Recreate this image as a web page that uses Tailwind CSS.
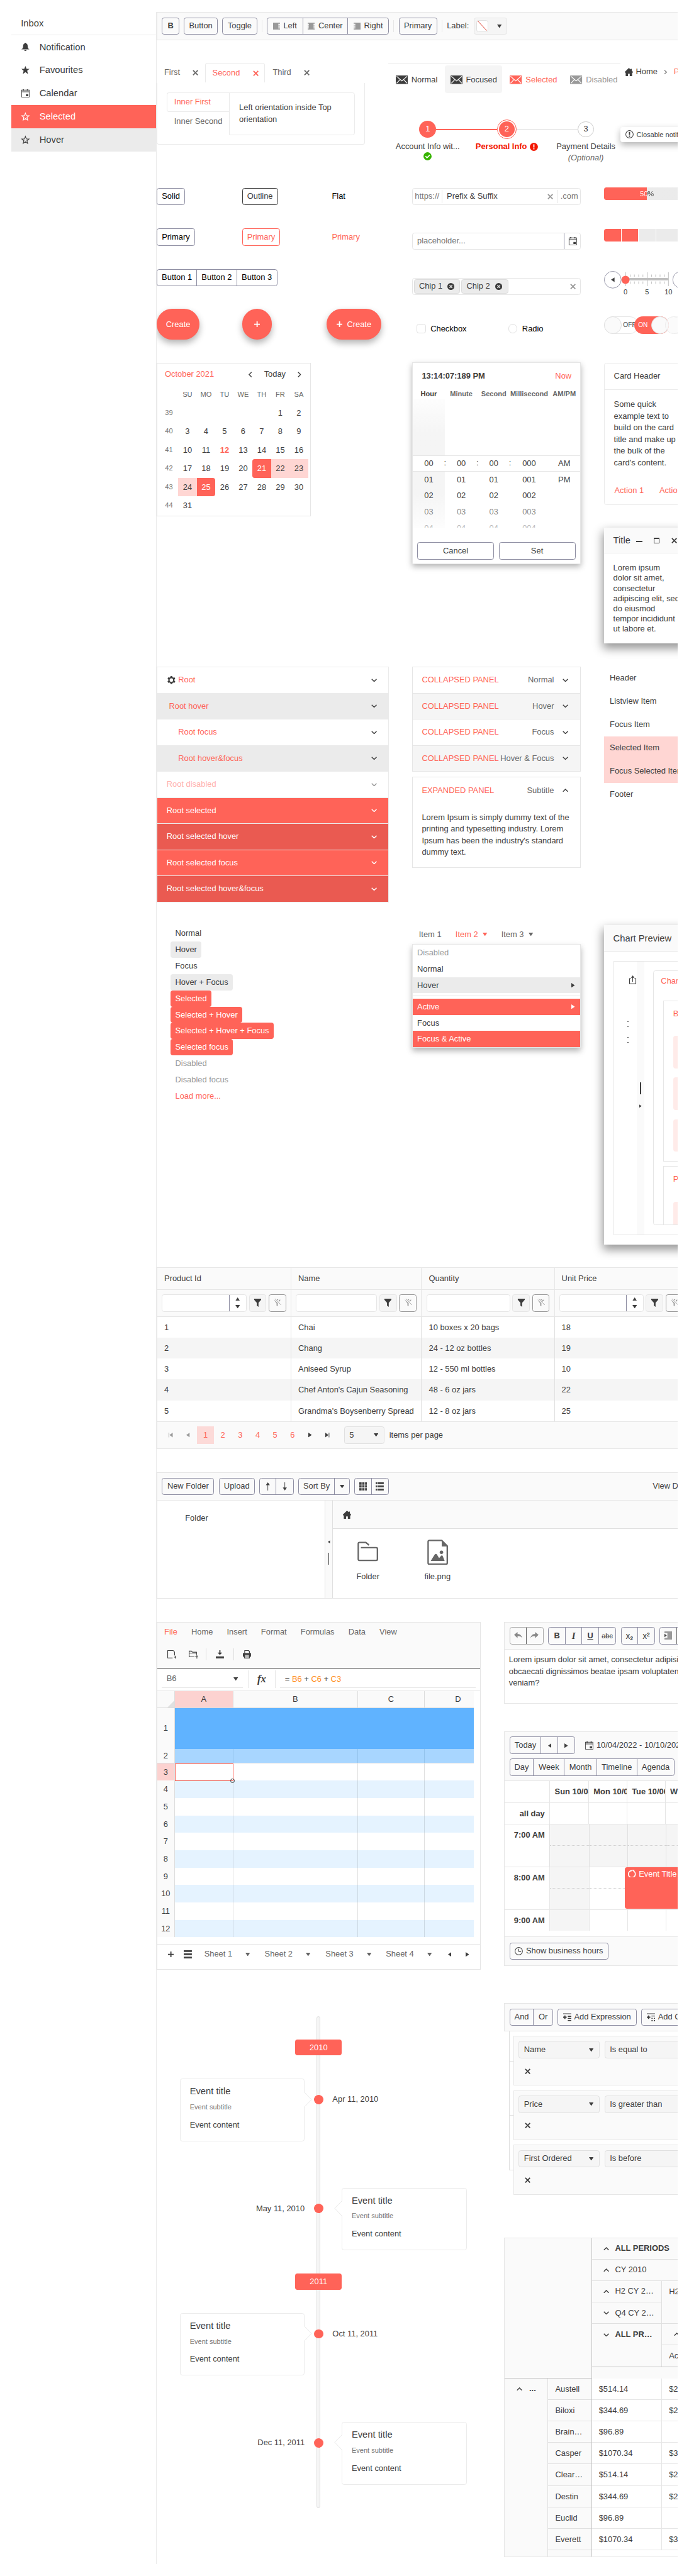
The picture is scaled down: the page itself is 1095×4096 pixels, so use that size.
<!DOCTYPE html>
<html lang="en">
<head>
<meta charset="utf-8">
<title>Theme preview</title>
<script src="https://cdn.jsdelivr.net/npm/@tailwindcss/browser@4"></script>
</head>
<body class="w-[1095px] h-[4096px] overflow-hidden bg-white">
<svg class="hidden">
  <symbol id="bell" viewBox="0 0 16 16"><path d="M8 1c-.8 0-1.2.5-1.2 1.2C4.600 2.800 4 5 4 7.500 4 10 3 11 1 12.500h14C13 11 12 10 12 7.500 12 5 11.400 2.800 9.200 2.200 9.200 1.500 8.800 1 8 1zM6 13.500c0 1 .8 1.700 2 1.700s2-.7 2-1.700z"/></symbol>
  <symbol id="star" viewBox="0 0 16 16"><path d="M8 1l2 5h5l-4 3.300L12.500 15 8 11.600 3.500 15 5 9.300 1 6h5z"/></symbol>
  <symbol id="staro" viewBox="0 0 16 16"><path fill="none" stroke="currentColor" stroke-width="1.200" d="M8 2l1.700 4.500h4.500l-3.600 3 1.300 4.700L8 11.300l-3.900 2.900 1.300-4.700-3.600-3h4.500z"/></symbol>
  <symbol id="cal" viewBox="0 0 16 16"><path fill-rule="evenodd" d="M1 2h14v13H1zM2 3v2h12V3zM2 6v8h12V6z"/><path d="M3.500 1h2v2.500h-2zM10.500 1h2v2.500h-2zM9 9.500h4V13H9z"/></symbol>
  <symbol id="x" viewBox="0 0 10 10"><path fill="none" stroke="currentColor" stroke-width="2" d="M1 1l8 8M9 1L1 9"/></symbol>
  <symbol id="mail" viewBox="0 0 21 15"><rect width="21" height="15" rx="1"/><path fill="none" stroke="#fff" stroke-width="1.300" d="M1.500 1.500l9 8 9-8M1.500 13.500l6-6.500M19.500 13.500l-6-6.500"/></symbol>
  <symbol id="home" viewBox="0 0 14 14"><path d="M7 0l3 2.800V1.500h2v3L14 6.800V8h-1.500v6H8.500v-4h-3v4h-4V8H0V6.800z"/></symbol>
  <symbol id="cr" viewBox="0 0 6 8"><path fill="none" stroke="currentColor" stroke-width="1.300" d="M1 .8L4.800 4 1 7.200"/></symbol>
  <symbol id="vd" viewBox="0 0 10 6"><path fill="none" stroke="currentColor" stroke-width="1.500" d="M.8.8L5 5 9.200.8"/></symbol>
  <symbol id="vu" viewBox="0 0 10 6"><path fill="none" stroke="currentColor" stroke-width="1.500" d="M.8 5.200L5 1l4.200 4.200"/></symbol>
  <symbol id="vl" viewBox="0 0 6 10"><path fill="none" stroke="currentColor" stroke-width="1.500" d="M5.200.8L1 5l4.200 4.200"/></symbol>
  <symbol id="vr" viewBox="0 0 6 10"><path fill="none" stroke="currentColor" stroke-width="1.500" d="M.8.8L5 5 .8 9.200"/></symbol>
  <symbol id="td" viewBox="0 0 8 6"><path d="M0 0h8L4 6z"/></symbol>
  <symbol id="tu" viewBox="0 0 8 6"><path d="M0 6h8L4 0z"/></symbol>
  <symbol id="tr" viewBox="0 0 6 8"><path d="M0 0v8l6-4z"/></symbol>
  <symbol id="tl" viewBox="0 0 6 8"><path d="M6 0v8L0 4z"/></symbol>
  <symbol id="plus" viewBox="0 0 10 10"><path d="M4 0h2v4h4v2H6v4H4V6H0V4h4z"/></symbol>
  <symbol id="xc" viewBox="0 0 12 12"><circle cx="6" cy="6" r="6"/><path fill="none" stroke="#ebebeb" stroke-width="1.600" d="M3.700 3.700l4.600 4.600M8.300 3.700L3.700 8.300"/></symbol>
  <symbol id="gear" viewBox="0 0 16 16"><path fill-rule="evenodd" d="M6.600 1h2.800l.4 2 1.600.9 1.900-.7 1.400 2.400-1.500 1.400v2l1.500 1.400-1.400 2.400-1.900-.7-1.600.9-.4 2H6.600l-.4-2-1.600-.9-1.900.7-1.400-2.400L2.800 9V7L1.300 5.600l1.400-2.400 1.900.7L6.200 3zM8 5a3 3 0 100 6 3 3 0 000-6z"/></symbol>
  <symbol id="filt" viewBox="0 0 14 14"><path d="M1 0h12v2L8.500 7v7L5.500 12V7L1 2z"/></symbol>
  <symbol id="filtx" viewBox="0 0 14 14"><path d="M1 1l7 6.500V13l-2-1V8L3 4zM6 1h3l-1 2zM10 2h3L9.500 6z"/><path fill="none" stroke="currentColor" d="M3 0l11 11"/></symbol>
  <symbol id="au" viewBox="0 0 8 14"><path d="M4 0l3.500 5h-3v9h-1V5h-3z"/></symbol>
  <symbol id="ad" viewBox="0 0 8 14"><path d="M4 14l3.500-5h-3V0h-1v9h-3z"/></symbol>
  <symbol id="al" viewBox="0 0 12 12"><path d="M0 0h12v2H9v2h3v1H9v2h3v1H9v2h3v2H0z"/></symbol>
  <symbol id="ac" viewBox="0 0 12 12"><path d="M0 0h12v2h-2v2h2v1h-2v2h2v1h-2v2h2v2H0v-2h2V8H0V7h2V5H0V4h2V2H0z"/></symbol>
  <symbol id="ar" viewBox="0 0 12 12"><path d="M0 0h12v12H0v-2h3V8H0V7h3V5H0V4h3V2H0z"/></symbol>
  <symbol id="undo" viewBox="0 0 14 12"><path d="M6 0v3.500c4 0 7 2 8 7-2-3-4-3.500-8-3.500v3.500L0 5z"/></symbol>
  <symbol id="redo" viewBox="0 0 14 12"><path d="M8 0v3.500C4 3.500 1 5.500 0 10.500c2-3 4-3.500 8-3.500v3.500L14 5z"/></symbol>
</svg>

<div class="[zoom:0.922] flex w-[1188px] h-[4442px] pl-5 pt-[21px] bg-white text-[#3d3d3d] text-sm leading-5 font-['Liberation_Sans',Arial,sans-serif] whitespace-nowrap overflow-hidden">

<!-- Drawer -->
<aside class="w-[249px] shrink-0 text-base">
  <div class="h-10 pl-4 border-b border-[#ebebeb] flex items-center">Inbox</div>
  <div class="h-10 pl-4 flex items-center gap-4"><svg class="size-4 fill-current"><use href="#bell"/></svg>Notification</div>
  <div class="h-10 pl-4 flex items-center gap-4"><svg class="size-4 fill-current"><use href="#star"/></svg>Favourites</div>
  <div class="h-10 pl-4 flex items-center gap-4"><svg class="size-4 fill-current"><use href="#cal"/></svg>Calendar</div>
  <div class="h-10 pl-4 flex items-center gap-4 bg-[#ff6358] text-white"><svg class="size-4"><use href="#staro"/></svg>Selected</div>
  <div class="h-10 pl-4 flex items-center gap-4 bg-[#ebebeb]"><svg class="size-4"><use href="#staro"/></svg>Hover</div>
</aside>

<main class="w-[899px] h-[4401px] shrink-0 border-l border-[#ebebeb] overflow-hidden">

<!-- Toolbar -->
<section class="h-12 w-[960px] border border-[#e6e6e6] bg-[#fafafa] pl-2 flex items-center gap-2">
  <div class="w-[30px] h-[30px] border border-[#8f8fa3] rounded grid place-items-center font-bold">B</div>
  <div class="w-[58px] h-[30px] border border-[#8f8fa3] rounded grid place-items-center">Button</div>
  <div class="w-[60px] h-[30px] border border-[#8f8fa3] rounded grid place-items-center">Toggle</div>
  <div class="w-px h-5 bg-[#e6e6e6]"></div>
  <div class="h-[30px] flex border border-[#8f8fa3] rounded">
    <div class="w-[60px] flex items-center justify-center gap-1.5"><svg class="size-3 fill-[#999]"><use href="#al"/></svg>Left</div>
    <div class="w-[79px] flex items-center justify-center gap-1.5 border-x border-[#8f8fa3]"><svg class="size-3 fill-[#999]"><use href="#ac"/></svg>Center</div>
    <div class="w-[69px] flex items-center justify-center gap-1.5"><svg class="size-3 fill-[#999]"><use href="#ar"/></svg>Right</div>
  </div>
  <div class="w-px h-5 bg-[#e6e6e6]"></div>
  <div class="w-[66px] h-[30px] border border-[#8f8fa3] rounded grid place-items-center">Primary</div>
  <div class="w-px h-5 bg-[#e6e6e6]"></div>
  <div>Label:</div>
  <div class="w-[58px] h-[30px] border border-[#e6e6e6] rounded bg-[#f5f5f5] flex items-center pl-1">
    <svg class="size-5 bg-white border border-[#e0e0e0] rounded-sm" viewBox="0 0 18 18"><path d="M1 0l16 17" stroke="#d9301f"/></svg>
    <svg class="w-2 h-1.5 ml-[15px] fill-current"><use href="#td"/></svg>
  </div>
</section>

<!-- Tabs, navigation, stepper -->
<section class="h-[255px] w-[1000px] flex pt-10">
  <div class="w-[399px] shrink-0 text-[#666]">
    <div class="flex h-[34px] pb-px">
      <div class="w-[83px] pl-[13px] flex items-center"><span class="w-[49px]">First</span><svg class="size-2.5"><use href="#x"/></svg></div>
      <div class="w-[104px] pl-3 flex items-center border border-b-0 border-[#ebebeb] rounded-t text-[#ff6358]"><span class="w-[70px]">Second</span><svg class="size-2.5"><use href="#x"/></svg></div>
      <div class="pl-[13px] flex items-center"><span class="w-[54px]">Third</span><svg class="size-2.5"><use href="#x"/></svg></div>
    </div>
    <div class="w-[359px] h-[107px] border border-t-0 border-[#ebebeb] rounded-b pl-4 pt-4 flex">
      <div class="w-[108px]">
        <div class="h-[34px] w-[109px] border border-r-0 border-[#ebebeb] rounded-l pl-3 flex items-center text-[#ff6358]">Inner First</div>
        <div class="h-[34px] pl-[13px] flex items-center">Inner Second</div>
      </div>
      <div class="w-[217px] h-[74px] -z-0 border border-[#ebebeb] rounded-r pl-4 pt-4 text-[#3d3d3d]">Left orientation inside Top<br>orientation</div>
    </div>
  </div>
  <div class="w-[400px] shrink-0">
    <div class="h-[52px] border-t border-[#ebebeb] pt-[3px] flex">
      <div class="w-[98px] pl-[13px] pt-px flex items-center gap-1.5"><svg class="w-[21px] h-[15px] fill-current"><use href="#mail"/></svg>Normal</div>
      <div class="w-[99px] pl-[9px] pt-px flex items-center gap-1.5 bg-[#f5f5f5] rounded"><svg class="w-[21px] h-[15px] fill-current"><use href="#mail"/></svg>Focused</div>
      <div class="w-[104px] pl-[13px] pt-px flex items-center gap-1.5 text-[#ff6358]"><svg class="w-[21px] h-[15px] fill-current"><use href="#mail"/></svg>Selected</div>
      <div class="w-[99px] pl-[13px] pt-px flex items-center gap-1.5 text-[#999]"><svg class="w-[21px] h-[15px] fill-current"><use href="#mail"/></svg>Disabled</div>
    </div>
    <div class="mt-[45px] w-[409px] grid grid-cols-3 text-center">
      <div>
        <div class="flex items-center h-[34px]"><i class="flex-1"></i><b class="size-[29px] rounded-full bg-[#ff6358] text-white font-normal grid place-items-center">1</b><i class="flex-1 h-0.5 bg-[#ff6358]"></i></div>
        <div class="mt-[3px]">Account Info wit...</div>
        <svg class="size-3.5 mx-auto" viewBox="0 0 14 14"><circle cx="7" cy="7" r="7" fill="#37b400"/><path d="M3.500 7l2.700 2.700L11 4.800" fill="none" stroke="#fff" stroke-width="1.800"/></svg>
      </div>
      <div>
        <div class="flex items-center h-[34px]"><i class="flex-1 h-0.5 bg-[#ff6358]"></i><b class="size-[34px] rounded-full border border-[#ff6358] p-[2px]"><span class="size-full rounded-full bg-[#ff6358] text-white font-normal grid place-items-center">2</span></b><i class="flex-1 h-0.5 bg-[#ebebeb]"></i></div>
        <div class="mt-[3px] flex items-center justify-center gap-[5px] font-bold text-[#f31700]">Personal Info<svg class="size-3.5" viewBox="0 0 14 14"><circle cx="7" cy="7" r="7" fill="#f31700"/><path d="M6 2.800h2v5.400H6zM6 9.300h2v2H6z" fill="#fff"/></svg></div>
      </div>
      <div>
        <div class="flex items-center h-[34px]"><i class="flex-1 h-0.5 bg-[#ebebeb]"></i><b class="size-7 rounded-full border border-[#ccc] font-normal grid place-items-center">3</b><i class="flex-1"></i></div>
        <div class="mt-[3px]">Payment Details</div>
        <div class="italic text-[#666]">(Optional)</div>
      </div>
    </div>
  </div>
  <div class="w-[200px] shrink-0">
    <div class="h-[30px] pl-2 flex items-center"><svg class="size-3.5 fill-current"><use href="#home"/></svg><span class="ml-[5px]">Home</span><svg class="w-1.5 h-2 ml-[11px] text-[#777]"><use href="#cr"/></svg><span class="ml-[11px] text-[#ff6358]">Products</span></div>
    <div class="mt-20 h-[26px] rounded shadow-[0_5px_12px_rgba(0,0,0,.3)] bg-white pl-[9px] flex items-center gap-[5px] text-xs">
      <svg class="size-3.5" viewBox="0 0 14 14"><circle cx="7" cy="7" r="6.400" fill="none" stroke="currentColor" stroke-width="1.100"/><path d="M6 3h2v5H6zM6 9.300h2v2H6z" fill="currentColor"/></svg>Closable notification
    </div>
  </div>
</section>

<!-- Buttons and inputs -->
<section class="h-[302px] w-[1100px] flex">
  <div class="w-[440px] shrink-0 text-black">
    <div class="grid grid-cols-[147px_146px_147px] justify-items-start gap-y-10">
      <div class="h-[30px] w-[49px] border border-[#8f8fa3] rounded grid place-items-center">Solid</div>
      <div class="h-[30px] w-[62px] border border-[#3d3d3d] rounded grid place-items-center text-[#3d3d3d]">Outline</div>
      <div class="h-[30px] pl-[9px] flex items-center">Flat</div>
      <div class="h-[30px] w-[66px] border border-[#8f8fa3] rounded grid place-items-center">Primary</div>
      <div class="h-[30px] w-[66px] border border-[#ff6358] rounded grid place-items-center text-[#ff6358]">Primary</div>
      <div class="h-[30px] pl-[9px] flex items-center text-[#ff6358]">Primary</div>
    </div>
    <div class="mt-10 h-[30px] w-[208px] border border-[#8f8fa3] rounded grid grid-cols-3 divide-x divide-[#8f8fa3]">
      <div class="grid place-items-center">Button 1</div><div class="grid place-items-center">Button 2</div><div class="grid place-items-center">Button 3</div>
    </div>
    <div class="mt-[39px] grid grid-cols-[147px_146px_147px] justify-items-start text-white">
      <div class="h-[53px] w-[74px] rounded-full bg-[#ff6358] shadow-[0_6px_12px_rgba(0,0,0,.3)] grid place-items-center">Create</div>
      <div class="h-[53px] w-[52px] rounded-full bg-[#ff6358] shadow-[0_6px_12px_rgba(0,0,0,.3)] grid place-items-center"><svg class="size-2.5 fill-current"><use href="#plus"/></svg></div>
      <div class="h-[53px] w-[94px] rounded-full bg-[#ff6358] shadow-[0_6px_12px_rgba(0,0,0,.3)] flex items-center justify-center gap-2"><svg class="size-2.5 fill-current"><use href="#plus"/></svg>Create</div>
    </div>
  </div>
  <div class="w-[331px] shrink-0">
    <div class="h-[30px] w-[291px] border border-[#e6e6e6] rounded flex items-center pl-1 text-[#757575]">
      <span class="w-[46px]">https://</span><i class="w-px h-[22px] bg-[#e6e6e6]"></i><span class="pl-2 w-[182px] text-[#3d3d3d]">Prefix &amp; Suffix</span><svg class="size-2.5 -ml-px text-[#999]"><use href="#x"/></svg><i class="w-px h-[22px] bg-[#e6e6e6] ml-2"></i><span class="ml-1">.com</span>
    </div>
    <div class="mt-[47px] h-[30px] w-[291px] border border-[#e6e6e6] rounded flex items-center pl-2 text-[#757575]">
      <span class="w-[253px]">placeholder...</span><i class="w-px h-full bg-[#8f8fa3]"></i><svg class="size-4 ml-1.5 fill-[#3d3d3d]"><use href="#cal"/></svg>
    </div>
    <div class="mt-12 h-[30px] w-[291px] border border-[#e6e6e6] rounded flex items-center pl-0.5 gap-0.5">
      <div class="h-[25px] w-20 rounded border border-[#dcdcdc] bg-[#ebebeb] flex items-center pl-2"><span class="w-[49px]">Chip 1</span><svg class="size-3 fill-current"><use href="#xc"/></svg></div>
      <div class="h-[25px] w-[81px] rounded border border-[#dcdcdc] bg-[#ebebeb] flex items-center pl-2"><span class="w-[49px]">Chip 2</span><svg class="size-3 fill-current"><use href="#xc"/></svg></div>
      <svg class="size-2.5 ml-[105px] text-[#999]"><use href="#x"/></svg>
    </div>
    <div class="mt-[50px] h-4 flex items-center pl-2 text-black">
      <i class="size-4 border border-[#e0e0e0] rounded"></i><span class="ml-2 w-[134px]">Checkbox</span><i class="size-4 border border-[#e0e0e0] rounded-full"></i><span class="ml-2">Radio</span>
    </div>
  </div>
  <div class="w-[300px] shrink-0">
    <div class="-mt-px h-[22px] w-[148px] rounded bg-linear-to-r from-[#ff6358] from-50% to-[#ebebeb] to-50% grid place-items-center text-xs overflow-hidden"><span class="bg-linear-to-r from-white from-50% to-[#3d3d3d] to-50% bg-clip-text text-transparent">50%</span></div>
    <div class="mt-[50px] h-[22px] w-[149px] rounded overflow-hidden grid grid-cols-5 gap-px *:bg-[#ebebeb]"><i class="bg-[#ff6358]!"></i><i class="bg-[#ff6358]!"></i><i></i><i></i><i></i></div>
    <svg class="mt-[50px] w-[160px] h-[46px] block" viewBox="0 0 160 46">
      <circle cx="15" cy="15" r="14.500" fill="none" stroke="#8f8fa3"/><path d="M12 15l6-4v8z" fill="#3d3d3d"/>
      <path stroke="#bbb" d="M37.500 2v24M74.500 2v24M111 2v24M45 6v4M45 18v4M52.300 6v4M52.300 18v4M59.700 6v4M59.700 18v4M67 6v4M67 18v4M82 6v4M82 18v4M89 6v4M89 18v4M96.500 6v4M96.500 18v4M104 6v4M104 18v4"/>
      <rect x="37" y="12" width="74" height="4" rx="2" fill="#bfbfbf"/><circle cx="37" cy="15" r="7" fill="#ff6358"/><circle cx="133" cy="15" r="14.500" fill="none" stroke="#8f8fa3"/>
      <g font-size="12" text-anchor="middle" fill="#3d3d3d"><text x="37" y="40">0</text><text x="74" y="40">5</text><text x="111" y="40">10</text></g>
    </svg>
    <div class="mt-[33px] h-[30px] flex text-[11px]">
      <div class="w-[60px] h-[30px] shrink-0 rounded-full border border-[#e6e6e6] flex items-center"><i class="size-[30px] -ml-px shrink-0 rounded-full border border-[#e0e0e0] bg-[#fafafa]"></i><span class="ml-[3px]">OFF</span></div>
      <div class="relative z-10 w-[60px] h-[30px] -ml-2 shrink-0 rounded-full bg-[#ff6358] text-white flex items-center"><span class="ml-[7px] w-[23px]">ON</span><i class="size-[30px] shrink-0 rounded-full border border-[#e0e0e0] bg-[#fafafa]"></i></div>
      <div class="relative z-20 w-[60px] h-[30px] -ml-[7px] shrink-0 rounded-full border border-[#eee] flex items-center opacity-60"><i class="size-[30px] -ml-px shrink-0 rounded-full border border-[#e0e0e0] bg-[#fafafa]"></i></div>
    </div>
  </div>
</section>

<!-- Calendar, time picker, card, window -->
<section class="h-[524px] w-[1100px] flex">
  <div class="w-[440px] shrink-0">
    <div class="w-[266px] h-[264px] border border-[#e6e6e6]">
      <div class="h-[38px] pl-[13px] flex items-center"><span class="w-[144px] text-[#ff6358]">October 2021</span><svg class="w-1.5 h-2.5"><use href="#vl"/></svg><span class="ml-[21px] mr-[21px]">Today</span><svg class="w-1.5 h-2.5"><use href="#vr"/></svg></div>
      <div class="h-[31px] pl-9 grid grid-cols-[repeat(7,32px)] items-center text-center text-xs text-[#666]"><span>SU</span><span>MO</span><span>TU</span><span>WE</span><span>TH</span><span>FR</span><span>SA</span></div>
      <div id="month" class="grid grid-cols-[36px_repeat(7,32px)] auto-rows-[32px] text-center"></div>
    </div>
  </div>
  <div class="w-[331px] shrink-0">
    <div class="-mt-px w-[291px] h-[348px] border border-[#e6e6e6] shadow-[0_4px_10px_rgba(0,0,0,.3)] bg-white">
      <div class="h-[46px] flex items-center justify-between pl-4 pr-[15px]"><b>13:14:07:189 PM</b><span class="text-[#ff6358]">Now</span></div>
      <div class="h-4 grid grid-cols-[56px_56px_56px_66px_55px] text-center text-xs leading-[14px] font-bold text-[#666] justify-items-center"><span class="text-[#3d3d3d]">Hour</span><span>Minute</span><span>Second</span><span>Millisecond</span><span>AM/PM</span></div>
      <div class="relative h-[222px] overflow-hidden">
        <div class="h-[97px] w-14 bg-linear-to-b from-[#fdfdfd] to-[#f5f5f5] to-60%"></div>
        <div class="h-7 border-y border-[#e6e6e6] grid grid-cols-[56px_56px_56px_66px_55px] text-center leading-[26px]"><span>00</span><span>00</span><span>00</span><span>000</span><span>AM</span></div>
        <div class="absolute inset-x-0 top-[98px] flex pl-[54px] leading-6"><span class="w-14">:</span><span class="w-14">:</span><span>:</span></div>
        <div class="w-14 h-[97px] bg-linear-to-b from-[#f5f5f5] from-40% to-[#fdfdfd]"></div>
        <div class="absolute inset-x-0 top-[125px] grid grid-cols-[56px_56px_56px_66px_55px] text-center leading-7">
          <span>01</span><span>01</span><span>01</span><span>001</span><span>PM</span>
          <span>02</span><span>02</span><span>02</span><span>002</span><span></span>
          <span class="text-[#8c8c8c]">03</span><span class="text-[#8c8c8c]">03</span><span class="text-[#8c8c8c]">03</span><span class="text-[#8c8c8c]">003</span><span></span>
          <span class="text-[#bbb]">04</span><span class="text-[#bbb]">04</span><span class="text-[#bbb]">04</span><span class="text-[#bbb]">004</span><span></span>
        </div>
      </div>
      <div class="mt-[25px] px-2 grid grid-cols-2 gap-2"><div class="h-[30px] border border-[#8f8fa3] rounded grid place-items-center">Cancel</div><div class="h-[30px] border border-[#8f8fa3] rounded grid place-items-center">Set</div></div>
    </div>
  </div>
  <div class="w-[300px] shrink-0">
    <div class="h-[245px] border border-[#ebebeb] rounded">
      <div class="h-[45px] pl-4 border-b border-[#ebebeb] flex items-center">Card Header</div>
      <div class="pl-4 pt-4 h-[158px]">Some quick<br>example text to<br>build on the card<br>title and make up<br>the bulk of the<br>card's content.</div>
      <div class="pl-[17px] pt-[6px] flex gap-[27px] text-[#ff6358]"><span>Action 1</span><span>Action 2</span></div>
    </div>
    <div class="mt-[39px] h-[200px] bg-white shadow-[0_8px_16px_2px_rgba(0,0,0,.42)]">
      <div class="h-[45px] bg-[#fafafa] border-b border-[#ebebeb] pl-4 flex items-center text-base"><span class="w-10">Title</span><i class="w-2.5 h-0.5 mt-1 bg-[#3d3d3d]"></i><i class="ml-5 w-2.5 h-2.5 border border-t-[3px] border-[#3d3d3d]"></i><svg class="ml-5 size-2.5"><use href="#x"/></svg></div>
      <div class="pl-4 pt-4 leading-[17.500px]">Lorem ipsum<br>dolor sit amet,<br>consectetur<br>adipiscing elit, sed<br>do eiusmod<br>tempor incididunt<br>ut labore et.</div>
    </div>
  </div>
</section>

<!-- Panel bar, expansion panels, list -->
<section class="h-[446px] w-[1100px] flex">
  <div class="w-[440px] shrink-0">
    <div id="panelbar" class="w-[400px] border border-[#ebebeb] text-[#ff6358]"></div>
  </div>
  <div class="w-[331px] shrink-0 text-[#666]">
    <div id="expanders" class="w-[291px] border border-[#e6e6e6]"></div>
    <div class="mt-2 w-[291px] h-[158px] border border-[#e6e6e6]">
      <div class="h-[46px] pl-4 pr-5 flex items-center"><span class="flex-1 text-[#ff6358]">EXPANDED PANEL</span><span>Subtitle</span><svg class="ml-[15px] w-2.5 h-1.5 text-[#3d3d3d]"><use href="#vu"/></svg></div>
      <div class="pl-4 pt-[14px] text-[#3d3d3d]">Lorem Ipsum is simply dummy text of the<br>printing and typesetting industry. Lorem<br>Ipsum has been the industry's standard<br>dummy text.</div>
    </div>
  </div>
  <div class="w-[300px] shrink-0 *:h-10 *:pl-2.5 *:leading-10">
    <div>Header</div><div>Listview Item</div><div>Focus Item</div><div class="bg-[#ffd6d3]">Selected Item</div><div class="bg-[#ffd6d3]">Focus Selected Item</div><div>Footer</div>
  </div>
</section>

<!-- Tree, menu, chart preview -->
<section class="h-[590px] w-[1200px] flex">
  <div class="w-[440px] shrink-0 pl-6 flex flex-col items-start *:px-2 *:h-7 *:leading-7 *:rounded">
    <div>Normal</div><div class="bg-[#ebebeb]">Hover</div><div>Focus</div><div class="bg-[#ebebeb]">Hover + Focus</div>
    <div class="bg-[#ff6358] text-white">Selected</div><div class="bg-[#ff6358] text-white">Selected + Hover</div><div class="bg-[#ff6358] text-white">Selected + Hover + Focus</div><div class="bg-[#ff6358] text-white">Selected focus</div>
    <div class="text-[#999]">Disabled</div><div class="text-[#999]">Disabled focus</div><div class="text-[#ff6358]">Load more...</div>
  </div>
  <div class="w-[331px] shrink-0">
    <div class="h-8 pl-3 flex items-center text-[#666]"><span class="w-[63px]">Item 1</span><span class="text-[#ff6358] w-[47px]">Item 2</span><svg class="w-2 h-1.5 fill-[#ff6358]"><use href="#td"/></svg><span class="w-[47px] ml-6">Item 3</span><svg class="w-2 h-1.5 fill-current"><use href="#td"/></svg></div>
    <div class="w-[291px] border border-[#e6e6e6] shadow-[0_5px_10px_rgba(0,0,0,.3)] bg-white *:h-7 *:pl-2 *:leading-7">
      <div class="text-[#999]">Disabled</div><div>Normal</div>
      <div class="bg-[#ebebeb] flex items-center justify-between pr-[9px]">Hover<svg class="w-1.5 h-2 fill-current"><use href="#tr"/></svg></div>
      <hr class="h-px! my-1 border-[#e6e6e6]">
      <div class="bg-[#ff6358] text-white flex items-center justify-between pr-[9px]">Active<svg class="w-1.5 h-2 fill-current"><use href="#tr"/></svg></div>
      <div>Focus</div><div class="bg-[#ff6358] text-white">Focus &amp; Active</div>
    </div>
  </div>
  <div class="w-[400px] h-[550px] shrink-0 bg-white shadow-[0_8px_16px_2px_rgba(0,0,0,.42)]">
    <div class="h-[45px] pl-4 bg-[#fafafa] border-b border-[#e6e6e6] flex items-center text-base">Chart Preview</div>
    <div class="ml-4 mt-4 h-[473px] border border-[#e6e6e6] flex">
      <div class="w-10 shrink-0 relative">
        <svg class="absolute left-[27px] top-6 w-3 h-[15px]" viewBox="0 0 12 15"><path fill="none" stroke="#3d3d3d" stroke-width="1.200" d="M3 5.500H.6v8.900h10.800V5.500H9M6 11V2"/><path d="M6 0l3 4H3z" fill="#3d3d3d"/></svg>
        <div class="absolute left-[23px] top-[103px] w-[2px] h-2.5 border-y border-[#555]"></div>
        <div class="absolute left-[23px] top-[130px] w-[2px] h-2.5 border-y border-[#555]"></div>
      </div>
      <div class="w-3 shrink-0 bg-[#fafafa] flex flex-col items-center pt-[209px]"><i class="w-0.5 h-5 bg-[#3d3d3d]"></i><svg class="mt-[18px] w-1 h-1.5 fill-current"><use href="#tr"/></svg></div>
      <div class="w-[300px] h-[439px] ml-4 mt-4 shrink-0 border border-[#e6e6e6] rounded pl-4 overflow-hidden">
        <div class="h-[50px] -ml-1 pt-[7px] text-[#ff6358]">Chart</div>
        <div class="h-[278px] border border-[#e6e6e6] pl-4 text-[#ff6358]"><div class="h-[60px] pt-3">Bar</div><div class="h-14 rounded bg-[#ffebe9]"></div><div class="mt-4 h-14 rounded bg-[#ffebe9]"></div><div class="mt-4 h-14 rounded bg-[#ffebe9]"></div></div>
        <div class="mt-2 h-[278px] border border-[#e6e6e6] pl-4 text-[#ff6358]"><div class="h-[60px] pt-3">Pie</div><div class="h-14 rounded bg-[#ffebe9]"></div></div>
      </div>
    </div>
  </div>
</section>

<!-- Data grid -->
<section class="h-[353px] w-[960px]">
  <div class="h-[313px] border border-[#e6e6e6]">
    <div class="h-[37px] bg-[#fafafa] border-b border-[#e6e6e6] grid grid-cols-[231px_225px_229px_1fr] divide-x divide-[#e6e6e6] *:pl-3 *:leading-9"><div>Product Id</div><div>Name</div><div>Quantity</div><div>Unit Price</div></div>
    <div id="filters" class="h-[47px] bg-[#fafafa] border-b border-[#e6e6e6] grid grid-cols-[231px_225px_229px_1fr] divide-x divide-[#e6e6e6]"></div>
    <div id="rows"></div>
    <div class="h-[47px] bg-[#fafafa] border-t border-[#e6e6e6] flex items-center pl-2 text-center text-[#ff6358]">
      <span class="w-[30px] flex justify-center"><svg class="w-2 h-2 fill-[#999]" viewBox="0 0 8 8"><path d="M0 0h1v8H0zM7 0v8L1.500 4z"/></svg></span>
      <span class="w-[30px] flex justify-center"><svg class="w-1.5 h-2 fill-[#999]"><use href="#tl"/></svg></span>
      <span class="w-[30px] h-[30px] leading-[30px] bg-[#fcdad8]">1</span><span class="w-[30px]">2</span><span class="w-[30px]">3</span><span class="w-[30px]">4</span><span class="w-[30px]">5</span><span class="w-[30px]">6</span>
      <span class="w-[30px] flex justify-center"><svg class="w-1.5 h-2 fill-[#3d3d3d]"><use href="#tr"/></svg></span>
      <span class="w-[30px] flex justify-center"><svg class="w-2 h-2 fill-[#3d3d3d]" viewBox="0 0 8 8"><path d="M7 0h1v8H7zM1 0v8l5.500-4z"/></svg></span>
      <span class="ml-[14px] w-[70px] h-[30px] border border-[#e0e0e0] rounded bg-[#f5f5f5] text-[#3d3d3d] flex items-center justify-between px-2">5<svg class="w-2 h-1.5 fill-current mr-0.5"><use href="#td"/></svg></span>
      <span class="ml-2 text-[#3d3d3d]">items per page</span>
    </div>
  </div>
</section>

<!-- File manager -->
<section class="h-[258px] w-[960px]">
  <div class="h-[218px] border border-[#e6e6e6] flex flex-col">
    <div class="h-12 bg-[#fafafa] border-b border-[#e6e6e6] flex items-center pl-2 gap-2">
      <div class="w-[90px] h-[30px] border border-[#8f8fa3] rounded grid place-items-center">New Folder</div>
      <div class="w-[62px] h-[30px] border border-[#8f8fa3] rounded grid place-items-center">Upload</div>
      <div class="w-[59px] h-[30px] border border-[#8f8fa3] rounded grid grid-cols-2 divide-x divide-[#8f8fa3] *:grid *:place-items-center"><div><svg class="w-2 h-3.5 fill-current"><use href="#au"/></svg></div><div><svg class="w-2 h-3.5 fill-current"><use href="#ad"/></svg></div></div>
      <div class="w-[89px] h-[30px] border border-[#8f8fa3] rounded grid grid-cols-[62px_1fr] divide-x divide-[#8f8fa3] *:grid *:place-items-center"><div>Sort By</div><div><svg class="w-2 h-1.5 fill-current"><use href="#td"/></svg></div></div>
      <div class="w-[59px] h-[30px] border border-[#8f8fa3] rounded grid grid-cols-2 divide-x divide-[#8f8fa3] *:grid *:place-items-center"><div><svg class="size-3.5 fill-current" viewBox="0 0 14 14"><path d="M0 0h4v4H0zM5 0h4v4H5zM10 0h4v4h-4zM0 5h4v4H0zM5 5h4v4H5zM10 5h4v4h-4zM0 10h4v4H0zM5 10h4v4H5zM10 10h4v4h-4z"/></svg></div><div><svg class="size-3.5 fill-current" viewBox="0 0 14 14"><path d="M0 0h3v3H0zM4 0h10v3H4zM0 5.500h3v3H0zM4 5.500h10v3H4zM0 11h3v3H0zM4 11h10v3H4z"/></svg></div></div>
      <div class="ml-[447px]">View Details</div>
    </div>
    <div class="flex-1 flex">
      <div class="w-[290px] pl-12 pt-5 border-r border-[#e0e0e0]">Folder</div>
      <div class="w-[13px] bg-[#fafafa] border-r border-[#e0e0e0] flex flex-col items-center pt-[68px]"><svg class="w-1 h-1.5 fill-current"><use href="#tl"/></svg><i class="mt-4 w-px h-5 bg-[#3d3d3d]"></i></div>
      <div class="flex-1">
        <div class="h-[49px] bg-[#fafafa] border-b border-[#e0e0e0] pl-[17px] flex items-center"><svg class="size-3.5 fill-current"><use href="#home"/></svg></div>
        <div class="flex pt-[18px] text-center">
          <div class="w-[120px] flex flex-col items-center"><svg class="h-11 w-9" viewBox="0 0 36 44"><path fill="none" stroke="#666" stroke-width="2.500" d="M20 9.500L14.500 5H3.500a2 2 0 00-2 2v27a2 2 0 002 2h29a2 2 0 002-2V16a2 2 0 00-2-2H6"/></svg><span class="mt-[10px]">Folder</span></div>
          <div class="w-[120px] flex flex-col items-center"><svg class="h-11 w-9" viewBox="0 0 36 44"><path fill="none" stroke="#666" stroke-width="2.500" d="M25 1.500H3.500a2 2 0 00-2 2v37a2 2 0 002 2h29a2 2 0 002-2V11z"/><path fill="#666" d="M25 1v11h10zM6 37l6-10c2-3 4-3 5.500 0l3 5 2.500-3c1.500-2 3-2 4 0l3 8z"/><circle cx="24.500" cy="22" r="3" fill="#666"/></svg><span class="mt-[10px]">file.png</span></div>
        </div>
      </div>
    </div>
  </div>
</section>

<!-- Spreadsheet, editor, scheduler -->
<section class="h-[658px] w-[1300px] flex">
  <div class="w-[599px] shrink-0">
    <div class="w-[559px] h-[600px] border border-[#e6e6e6]">
      <div class="h-[79px] bg-[#fafafa] border-b border-[#3d3d3d]">
        <div class="h-[33px] pl-3 flex items-center gap-6 text-[#666]"><span class="text-[#ff6358]">File</span><span>Home</span><span>Insert</span><span>Format</span><span>Formulas</span><span>Data</span><span>View</span></div>
        <div class="h-[44px] pl-[17px] flex items-center">
          <svg class="size-4" viewBox="0 0 16 16"><path fill="none" stroke="currentColor" stroke-width="1.200" d="M9 14.400H.6V1.600H10L12.400 4v6M14 10.500v5M11.500 13h5"/></svg>
          <svg class="size-4 ml-[21px]" viewBox="0 0 16 16"><path fill="none" stroke="currentColor" stroke-width="1.200" d="M10 12.400H.6V2.600h4L6.500 4.500h6.900V9M1 6h12M14 9.500v6M11 12.500h5"/></svg>
          <i class="w-px h-5 bg-[#ddd] ml-[14px]"></i>
          <svg class="size-3.5 ml-4 fill-current" viewBox="0 0 14 14"><path d="M6 0h2v4h3L7 8 3 4h3zM0 10.500h14V14H0z"/></svg>
          <i class="w-px h-5 bg-[#ddd] ml-4"></i>
          <svg class="size-3.5 ml-4 fill-current" viewBox="0 0 14 14"><path fill-rule="evenodd" d="M2.500 0h8L12 2v3h2v6h-2v3H2v-3H0V5h2.500zM3.700 1.200V5h7V2H9.500V1.200z"/><path fill="#bbb" d="M3.500 8h7v5h-7z"/></svg>
        </div>
      </div>
      <div class="h-[39px] border-b border-[#e6e6e6] flex items-center">
        <div class="ml-2 w-[140px] h-[30px] border-b border-[#e6e6e6] flex items-center justify-between pl-2 pr-[9px] text-[#666]">B6<svg class="w-2 h-1.5 fill-[#3d3d3d]"><use href="#td"/></svg></div>
        <i class="ml-2 w-px h-[30px] bg-[#e6e6e6]"></i><span class="w-[46px] text-center font-['Liberation_Serif',serif] italic font-bold text-lg">fx</span><i class="w-px h-[30px] bg-[#e6e6e6]"></i>
        <div class="ml-2 w-[337px] h-[30px] border-b border-[#e6e6e6] pl-2 leading-[30px]">= <span class="text-[#ff8b17]">B6</span> + <span class="text-[#ff8b17]">C6</span> + <span class="text-[#ff8b17]">C3</span></div>
      </div>
      <div class="h-[438px] border-b border-[#e6e6e6]">
        <div class="w-[546px] h-[30px] bg-[#fafafa] border-b border-[#ddd] grid grid-cols-[30px_101px_215px_115px_85px] text-center leading-[29px]">
          <div class="border-r border-[#ddd] flex items-end justify-end"><svg class="w-3 h-3 fill-[#e0e0e0]" viewBox="0 0 12 12"><path d="M12 0v12H0z"/></svg></div><div class="bg-[#fcd2d0] border-r border-[#ddd]">A</div><div class="border-r border-[#ddd]">B</div><div class="border-r border-[#ddd]">C</div><div class="pl-[30px]">D</div>
        </div>
        <div id="cells"></div>
      </div>
      <div class="h-[33px] flex items-center pl-[18px] text-[#666]">
        <svg class="size-2.5 fill-[#3d3d3d]"><use href="#plus"/></svg><svg class="size-3.5 ml-[18px] fill-[#3d3d3d]" viewBox="0 0 14 14"><path d="M0 0h14v3H0zM0 5.500h14v3H0zM0 11h14v3H0z"/></svg>
        <span class="ml-[21px] w-[71px]">Sheet 1</span><svg class="w-2 h-1.5 fill-current"><use href="#td"/></svg>
        <span class="ml-[25px] w-[71px]">Sheet 2</span><svg class="w-2 h-1.5 fill-current"><use href="#td"/></svg>
        <span class="ml-[26px] w-[71px]">Sheet 3</span><svg class="w-2 h-1.5 fill-current"><use href="#td"/></svg>
        <span class="ml-[25px] w-[71px]">Sheet 4</span><svg class="w-2 h-1.5 fill-current"><use href="#td"/></svg>
        <svg class="ml-7 w-1.5 h-2 fill-[#3d3d3d]"><use href="#tl"/></svg><svg class="ml-6 w-1.5 h-2 fill-[#3d3d3d]"><use href="#tr"/></svg>
      </div>
    </div>
  </div>
  <div class="w-[600px] shrink-0">
    <div class="h-[141px] border border-[#e6e6e6]">
      <div class="h-[47px] bg-[#fafafa] border-b border-[#e6e6e6] pl-2 flex items-center gap-2 *:h-[30px] *:border *:rounded *:grid *:divide-x">
        <div class="w-[59px] grid-cols-2 border-[#aaa] divide-[#666] *:grid *:place-items-center"><div><svg class="w-3.5 h-3 fill-[#888]"><use href="#undo"/></svg></div><div><svg class="w-3.5 h-3 fill-[#888]"><use href="#redo"/></svg></div></div>
        <div class="w-[117px] grid-cols-4 border-[#8f8fa3] divide-[#8f8fa3] *:grid *:place-items-center"><div class="font-bold">B</div><div class="font-bold italic font-['Liberation_Serif',serif] text-base">I</div><div class="font-bold underline">U</div><div class="line-through text-xs">abc</div></div>
        <div class="w-[59px] grid-cols-2 border-[#8f8fa3] divide-[#8f8fa3] *:grid *:place-items-center"><div class="text-[15px]"><span>x<sub class="text-[9px] font-bold">2</sub></span></div><div class="text-[15px]"><span>x<sup class="text-[9px] font-bold">2</sup></span></div></div>
        <div class="w-[59px] grid-cols-2 border-[#8f8fa3] divide-[#666] *:grid *:place-items-center"><div><svg class="w-3.5 h-3.5" viewBox="0 0 14 14"><path fill="#999" d="M0 0h14v14H0v-3h5V3H0z"/><path d="M0 4l4 3-4 3z" fill="#3d3d3d"/></svg></div><div></div></div>
      </div>
      <div class="pl-[7px] pt-2">Lorem ipsum dolor sit amet, consectetur adipisicing elit. Dolorem<br>obcaecati dignissimos beatae ipsam voluptatem suscipit<br>veniam?</div>
    </div>
    <div class="mt-12 h-[404px] border border-[#e6e6e6] flex flex-col">
      <div class="h-[85px] bg-[#fafafa] border-b border-[#e6e6e6] pl-2 pt-2">
        <div class="flex items-center"><div class="w-[113px] h-[30px] border border-[#8f8fa3] rounded grid grid-cols-[54px_29px_28px] divide-x divide-[#8f8fa3] *:grid *:place-items-center"><div>Today</div><div><svg class="w-1.5 h-2 fill-current"><use href="#tl"/></svg></div><div><svg class="w-1.5 h-2 fill-current"><use href="#tr"/></svg></div></div><svg class="ml-[17px] size-4 fill-current"><use href="#cal"/></svg><span class="ml-1">10/04/2022 - 10/10/2022</span></div>
        <div class="mt-2 w-[285px] h-[30px] border border-[#8f8fa3] rounded grid grid-cols-[41px_53px_56px_69px_64px] divide-x divide-[#8f8fa3] *:grid *:place-items-center"><div>Day</div><div>Week</div><div>Month</div><div>Timeline</div><div>Agenda</div></div>
      </div>
      <div class="h-[37px] border-b border-[#e6e6e6] grid grid-cols-[78px_67px_66px_66px_67px] divide-x divide-[#e6e6e6] font-bold leading-9 *:pl-2 *:overflow-hidden"><div></div><div>Sun 10/04</div><div>Mon 10/05</div><div>Tue 10/06</div><div>Wed 10/07</div></div>
      <div class="h-[37px] border-b border-[#e6e6e6] grid grid-cols-[78px_67px_66px_66px_67px] divide-x divide-[#e6e6e6] font-bold leading-9 text-right"><div class="pr-2">all day</div><div></div><div></div><div></div><div></div></div>
      <div class="h-[195px] border-b border-[#e6e6e6] relative font-bold leading-9 text-right">
        <div class="h-[74px] grid grid-cols-[78px_68px_66px_67px_67px] divide-x divide-[#e0e0e0] border-b border-[#e6e6e6]"><div class="pr-2">7:00 AM</div><div class="bg-[#f5f5f5]"><div class="h-[37px] border-b border-dotted border-[#d0d0d0]"></div></div><div class="bg-[#f5f5f5]"><div class="h-[37px] border-b border-dotted border-[#d0d0d0]"></div></div><div class="bg-[#f5f5f5]"><div class="h-[37px] border-b border-dotted border-[#d0d0d0]"></div></div><div class="bg-[#f5f5f5]"><div class="h-[37px] border-b border-dotted border-[#d0d0d0]"></div></div></div>
        <div class="h-[74px] grid grid-cols-[78px_68px_66px_67px_67px] divide-x divide-[#e6e6e6] border-b border-[#e6e6e6]"><div class="pr-2">8:00 AM</div><div class="bg-[#f5f5f5]"><div class="h-[37px] border-b border-dotted border-[#d0d0d0]"></div></div><div><div class="h-[37px] border-b border-dotted border-[#d0d0d0]"></div></div><div></div><div></div></div>
        <div class="h-[35px] grid grid-cols-[78px_68px_66px_67px_67px] divide-x divide-[#e6e6e6]"><div class="pr-2">9:00 AM</div><div class="bg-[#f5f5f5]"></div><div></div><div></div><div></div></div>
        <div class="absolute left-[207px] top-[74px] w-[300px] h-[72px] rounded bg-[#ff6358] text-white font-normal leading-6 flex gap-[5px] pl-[5px]"><svg class="size-3.5 mt-1" viewBox="0 0 14 14"><path fill="none" stroke="#fff" stroke-width="1.800" d="M10.500 2.800A6 6 0 117 1.500"/><path d="M6.500 0h4.500v4.500z" fill="#fff"/></svg>Event Title</div>
      </div>
      <div class="flex-1 bg-[#fafafa] pl-2 flex items-center"><div class="w-[171px] h-[30px] border border-[#8f8fa3] rounded flex items-center justify-center gap-[5px]"><svg class="size-3.5" viewBox="0 0 14 14"><circle cx="7" cy="7" r="6.400" fill="none" stroke="currentColor" stroke-width="1.100"/><path fill="none" stroke="currentColor" stroke-width="1.200" d="M7 3v4.500h4"/></svg>Show business hours</div></div>
    </div>
  </div>
</section>

<!-- Timeline, filter, pivot grid -->
<section class="w-[1300px] flex">
  <div class="w-[599px] shrink-0 pt-[22px]">
    <div class="relative w-[558px] h-[848px]">
      <div class="absolute left-[276px] w-1.5 h-full rounded border border-[#e0e0e0] bg-[#f5f5f5]"></div>
      <div id="timeline" class="relative pt-10"></div>
    </div>
  </div>
  <div class="w-[600px] shrink-0">
    <div class="h-12 border border-[#e6e6e6] bg-[#fafafa] pl-2 flex items-center gap-2">
      <div class="w-[75px] h-[30px] border border-[#8f8fa3] rounded grid grid-cols-[41px_1fr] divide-x divide-[#8f8fa3] *:grid *:place-items-center"><div>And</div><div>Or</div></div>
      <div class="w-[136px] h-[30px] border border-[#8f8fa3] rounded flex items-center justify-center gap-[5px]"><svg class="size-3.5 fill-current" viewBox="0 0 14 14"><path fill="#999" d="M0 0h14v2H0z"/><path d="M2 4h2v2h2v2H4v2H2V8H0V6h2zM8 4.500h6v2H8zM8 8h6v2H8zM8 12h6v1.500H8z"/></svg>Add Expression</div>
      <div class="w-[120px] h-[30px] border border-[#8f8fa3] rounded flex items-center pl-[9px] gap-[5px]"><svg class="size-3.5 fill-current" viewBox="0 0 14 14"><path fill="#999" d="M0 0h14v2H0zM8 4h6v2H8z"/><path d="M2 4h2v2h2v2H4v2H2V8H0V6h2zM8 8h2v2H8zM12 8h2v2h-2zM8 12h2v2H8zM12 12h2v2h-2z"/></svg>Add Group</div>
    </div>
    <div class="relative">
      <div class="absolute left-2 top-0 w-2 h-[240px] border-l border-b border-[#e0e0e0]"></div>
      <div class="absolute left-2 top-[51px] w-2 h-px bg-[#e0e0e0]"></div>
      <div class="absolute left-2 top-[145px] w-2 h-px bg-[#e0e0e0]"></div>
      <div id="conditions" class="pl-4 pt-2 flex flex-col gap-2"></div>
    </div>
    <div class="mt-[74px] h-[551px] border border-[#e6e6e6] bg-[#fafafa] flex">
      <div class="w-[150px] shrink-0 border-r border-[#c4c4c4]">
        <div class="h-[242px] border-b border-[#c4c4c4]"></div>
        <div class="flex h-[307px]"><div class="w-[75px] border-r border-[#e0e0e0] pl-5 h-full"><div class="h-9 flex items-center"><svg class="w-2.5 h-1.5"><use href="#vu"/></svg><b class="ml-3">...</b></div></div><div id="cities" class="flex-1"></div></div>
      </div>
      <div class="flex-1">
        <div class="h-[37px] border-b border-[#e0e0e0] pl-5 flex items-center font-bold"><svg class="w-2.5 h-1.5 mr-2.5"><use href="#vu"/></svg>ALL PERIODS</div>
        <div class="h-[37px] border-b border-[#e0e0e0] pl-5 flex items-center"><svg class="w-2.5 h-1.5 mr-2.5"><use href="#vu"/></svg>CY 2010</div>
        <div class="flex h-[148px] border-b border-[#c4c4c4]">
          <div class="w-[121px] border-r border-[#e0e0e0]">
            <div class="h-[37px] border-b border-[#e0e0e0] pl-5 flex items-center"><svg class="w-2.5 h-1.5 mr-2.5"><use href="#vu"/></svg>H2 CY 2…</div>
            <div class="h-[37px] border-b border-[#e0e0e0] pl-5 flex items-center"><svg class="w-2.5 h-1.5 mr-2.5"><use href="#vd"/></svg>Q4 CY 2…</div>
            <div class="h-[37px] pl-5 flex items-center font-bold"><svg class="w-2.5 h-1.5 mr-2.5"><use href="#vd"/></svg>ALL PR…</div>
          </div>
          <div class="flex-1">
            <div class="h-[74px] border-b border-[#e0e0e0] pl-3 leading-9">H2 CY 2010</div>
            <div class="h-[37px] border-b border-[#e0e0e0] pl-5 flex items-center"><svg class="w-2.5 h-1.5"><use href="#vu"/></svg></div>
            <div class="h-9 pl-3 leading-9">Accessories</div>
          </div>
        </div>
        <div class="h-5"></div>
        <div id="values" class="bg-white h-[307px]"></div>
      </div>
    </div>
  </div>
</section>
</main>
</div>

<script>
const put = (id, html) => { document.getElementById(id).innerHTML = html; };

// Calendar weeks
let month = '';
for (let w = 0; w < 6; w++) {
  month += `<span class="text-xs text-[#757575] leading-8 pl-1">${39 + w}</span>`;
  for (let d = 0; d < 7; d++) {
    const n = w * 7 + d - 4;
    let c = 'leading-8';
    if (n === 12) c = 'leading-8 font-bold text-[#ff6358]';
    if (n > 21 && n < 25) c = 'leading-8 bg-[#ffd6d3]';
    if (n === 21) c = 'leading-8 bg-[#ff6358] text-white rounded-l';
    if (n === 25) c = 'leading-8 bg-[#ff6358] text-white rounded-r';
    month += `<span class="${c}">${n > 0 && n < 32 ? n : ''}</span>`;
  }
}
put('month', month);

// Panel bar items
put('panelbar', [
  ['Root', 'pl-4 text-[#ff6358]'], ['Root hover', 'pl-5 bg-[#ebebeb]'], ['Root focus', 'pl-9'], ['Root hover&amp;focus', 'pl-9 bg-[#ebebeb]'],
  ['Root disabled', 'pl-4 text-[#ffb1ac]'], ['Root selected', 'pl-4 bg-[#ff6358] text-white'], ['Root selected hover', 'pl-4 bg-[#ea5a51] text-white'],
  ['Root selected focus', 'pl-4 bg-[#ff6358] text-white'], ['Root selected hover&amp;focus', 'pl-4 bg-[#ea5a51] text-white']
].map(([t, c], i) => `<div class="h-[45px] border-b border-[#ebebeb] last:border-b-0 last:h-11 flex items-center justify-between pr-[19px] ${c}"><span class="flex items-center gap-1">${i ? '' : '<svg class="size-4 fill-[#3d3d3d]"><use href="#gear"/></svg>'}${t}</span><svg class="w-2.5 h-1.5 ${i > 4 ? 'text-white' : i === 4 ? 'text-[#999]' : 'text-[#3d3d3d]'}"><use href="#vd"/></svg></div>`).join(''));

put('expanders', ['Normal', 'Hover', 'Focus', 'Hover &amp; Focus'].map((t, i) =>
  `<div class="h-[45px] last:h-11 border-b border-[#e6e6e6] last:border-b-0 pl-4 pr-5 flex items-center ${i % 2 ? 'bg-[#f5f5f5]' : ''}"><span class="flex-1 text-[#ff6358]">COLLAPSED PANEL</span><span>${t}</span><svg class="ml-[15px] w-2.5 h-1.5 text-[#3d3d3d]"><use href="#vd"/></svg></div>`).join(''));

// Grid filter row and data
const spin = '<span class="w-[29px] border-l border-[#8f8fa3] h-full flex flex-col items-center justify-center gap-2"><svg class="w-2 h-1.5 fill-current"><use href="#tu"/></svg><svg class="w-2 h-1.5 fill-current"><use href="#td"/></svg></span>';
put('filters', [[ 'w-[146px]', 1], ['w-[140px]', 0], ['w-[144px]', 0], ['w-[145px]', 1]].map(([w, s]) =>
  `<div class="pl-2 flex items-center gap-1"><div class="${w} h-[30px] border border-[#e6e6e6] rounded bg-white flex justify-end">${s ? spin : ''}</div><div class="size-[30px] border border-[#e6e6e6] rounded bg-[#f5f5f5] grid place-items-center"><svg class="size-3.5 fill-current"><use href="#filt"/></svg></div><div class="size-[30px] border border-[#999] rounded grid place-items-center text-[#999]"><svg class="size-3.5 fill-current"><use href="#filtx"/></svg></div></div>`).join(''));
put('rows', [
  [1, 'Chai', '10 boxes x 20 bags', 18], [2, 'Chang', '24 - 12 oz bottles', 19], [3, 'Aniseed Syrup', '12 - 550 ml bottles', 10],
  [4, "Chef Anton's Cajun Seasoning", '48 - 6 oz jars', 22], [5, "Grandma's Boysenberry Spread", '12 - 8 oz jars', 25]
].map((r, i) => `<div class="h-9 grid grid-cols-[231px_225px_229px_1fr] divide-x divide-[#e0e0e0] *:pl-3 *:leading-9 ${i % 2 ? 'bg-[#f5f5f5]' : ''}">${r.map(v => `<div>${v}</div>`).join('')}</div>`).join(''));

// Spreadsheet rows
let cells = '';
for (let r = 1; r <= 12; r++) {
  const h = r === 1 ? 'h-[70px] leading-[70px]' : r === 2 ? 'h-[25px] leading-6' : 'h-[30px] leading-[30px]';
  const bg = r === 1 ? 'bg-[#60b3ff] border-[#60b3ff]' : r === 2 ? 'bg-[#a8d6ff] border-[#93c3ec]' : r % 2 ? 'bg-white border-[#e0e0e0]' : 'bg-[#e5f3ff] border-[#cbd8e3]';
  cells += `<div class="w-[546px] ${h} border-b border-[#dcdfe2] grid grid-cols-[30px_101px_215px_115px_85px]"><div class="border-r border-[#ddd] text-center ${r === 3 ? 'bg-[#fcd2d0]' : 'bg-[#fafafa]'}">${r}</div>` +
    [0, 1, 2, 3].map(c => r === 3 && c === 0 ? '<div class="relative border-2 border-[#ff6358] -mb-px"><i class="absolute -right-1 -bottom-1 size-2 rounded-full border border-[#3d3d3d]"></i></div>' : `<div class="${c < 3 ? 'border-r' : ''} ${bg}"></div>`).join('') + '</div>';
}
put('cells', cells);

// Timeline entries
const body = '<div class="text-base leading-5">Event title</div><div class="mt-[9px] text-xs leading-4 text-[#757575]">Event subtitle</div><div class="mt-[13px]">Event content</div>';
const left = d => `<div class="mt-10 h-[108px] relative"><div class="ml-10 w-[215px] h-full border border-[#ebebeb] rounded pl-4 pt-[11px] bg-white">${body}</div><svg class="absolute left-[254px] top-[22px] w-[14px] h-[27px]" viewBox="0 0 14 27"><path d="M0 0l13 13.500L0 27" fill="#fff" stroke="#e6e6e6"/></svg><i class="absolute left-[271px] top-7 size-4 rounded-full bg-[#ff6358]"></i><span class="absolute left-[303px] top-[26px]">${d}</span></div>`;
const right = d => `<div class="h-[108px] relative flex justify-end pr-[23px]"><div class="w-[216px] h-full border border-[#ebebeb] rounded pl-4 pt-[11px] bg-white">${body}</div><svg class="absolute left-[306px] top-[22px] w-[14px] h-[27px]" viewBox="0 0 14 27"><path d="M14 0L1 13.500 14 27" fill="#fff" stroke="#e6e6e6"/></svg><i class="absolute left-[271px] top-7 size-4 rounded-full bg-[#ff6358]"></i><span class="absolute right-[303px] top-[26px]">${d}</span></div>`;
const year = y => `<div class="ml-[239px] w-20 h-7 rounded bg-[#ff6358] text-white text-center leading-7">${y}</div>`;
put('timeline', year(2010) + left('Apr 11, 2010') + '<div class="h-20"></div>' + right('May 11, 2010') + '<div class="h-10"></div>' + year(2011) + left('Oct 11, 2011') + '<div class="h-20"></div>' + right('Dec 11, 2011'));

put('conditions', [['Name', 'Is equal to'], ['Price', 'Is greater than'], ['First Ordered', 'Is before']].map(([a, b]) =>
  `<div class="h-[86px] border border-[#e6e6e6] bg-[#fafafa] pl-2 pt-2"><div class="flex gap-2"><div class="w-[140px] h-[30px] border border-[#e0e0e0] rounded bg-[#f5f5f5] flex items-center justify-between pl-2 pr-2.5">${a}<svg class="w-2 h-1.5 fill-current"><use href="#td"/></svg></div><div class="w-[200px] h-[30px] border border-[#e0e0e0] rounded bg-[#f5f5f5] flex items-center pl-2">${b}</div></div><svg class="size-2.5 mt-[17px] ml-2.5"><use href="#x"/></svg></div>`).join(''));

// Pivot rows
const pivot = [['Austell', '$514.14', '$257.00'], ['Biloxi', '$344.69', '$234.00'], ['Brain…', '$96.89', ''], ['Casper', '$1070.34', '$345.00'], ['Clear…', '$514.14', '$257.00'], ['Destin', '$344.69', '$234.00'], ['Euclid', '$96.89', ''], ['Everett', '$1070.34', '$345.00']];
put('cities', pivot.map(p => `<div class="h-[37px] border-b border-[#e0e0e0] pl-3 leading-9">${p[0]}</div>`).join(''));
put('values', pivot.map(p => `<div class="h-[37px] border-b border-[#e6e6e6] grid grid-cols-[121px_1fr] leading-9"><div class="pl-3 border-r border-[#e6e6e6]">${p[1]}</div><div class="pl-3">${p[2]}</div></div>`).join(''));
</script>
</body>
</html>
